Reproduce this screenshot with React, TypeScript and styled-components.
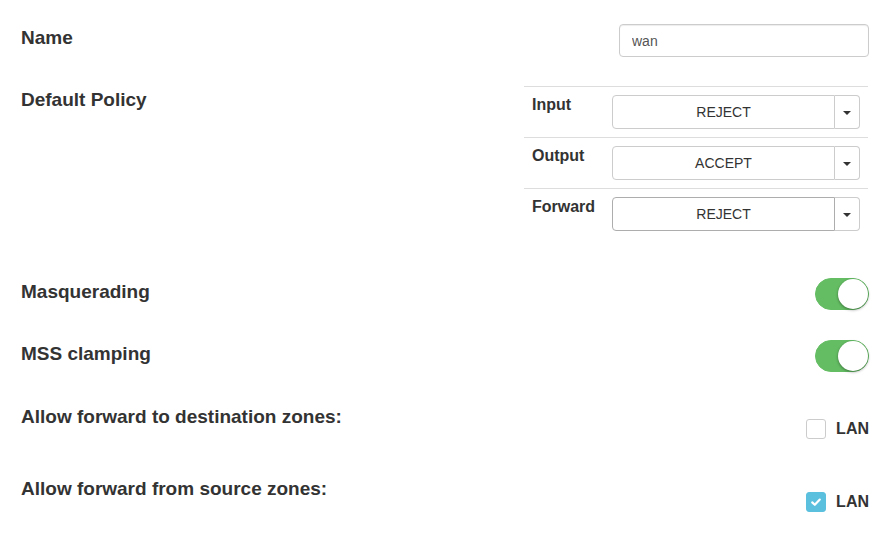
import React from 'react';
import styled, { createGlobalStyle } from 'styled-components';

const Global = createGlobalStyle`
  html, body { margin: 0; padding: 0; background: #fff; }
  body { font-family: "Liberation Sans", Arial, Helvetica, sans-serif; color: #333; }
  * { box-sizing: border-box; }
`;

const Page = styled.div`
  width: 890px;
  height: 545px;
  padding: 24px 21px 0 21px;
  overflow: hidden;
`;

const Row = styled.div<{ $top: number }>`
  display: flex;
  justify-content: space-between;
  align-items: flex-start;
  margin-top: ${(p) => p.$top}px;
`;

const Label = styled.div<{ $offset?: number }>`
  font-size: 19px;
  font-weight: 700;
  line-height: 20px;
  margin-top: ${(p) => p.$offset ?? 0}px;
`;

const TextInput = styled.input`
  width: 250px;
  height: 33px;
  border: 1px solid #ccc;
  border-radius: 4px;
  padding: 0 12px;
  font: 14px "Liberation Sans", Arial, sans-serif;
  color: #555;
  box-shadow: inset 0 1px 1px rgba(0, 0, 0, 0.075);
  outline: none;
`;

const PolicyTable = styled.div`
  width: 344px;
  margin-right: 1px;
  display: flex;
  flex-direction: column;
`;

const PolicyRow = styled.div`
  display: grid;
  grid-template-columns: 72px 248px;
  column-gap: 8px;
  padding: 8px;
  border-top: 1px solid #ddd;
`;

const PolicyLabel = styled.div`
  font-size: 16px;
  font-weight: 700;
  line-height: 20px;
`;

const SelectGroup = styled.div`
  display: flex;
  height: 34px;
`;

const SelectValue = styled.div<{ $active?: boolean }>`
  flex: 1;
  display: flex;
  align-items: center;
  justify-content: center;
  font-size: 14px;
  color: #333;
  border: 1px solid ${(p) => (p.$active ? '#adadad' : '#ccc')};
  border-radius: 4px 0 0 4px;
  background: #fff;
`;

const SelectCaret = styled.div`
  width: 25px;
  display: flex;
  align-items: center;
  justify-content: center;
  border: 1px solid #ccc;
  border-left: none;
  border-radius: 0 4px 4px 0;
  background: #fff;
  &::after {
    content: '';
    width: 0;
    height: 0;
    border-top: 4px solid #333;
    border-left: 4px solid transparent;
    border-right: 4px solid transparent;
    margin-top: 1px;
  }
`;

const Switch = styled.div<{ $on: boolean }>`
  position: relative;
  width: 54px;
  height: 32px;
  border-radius: 16px;
  border: 1px solid ${(p) => (p.$on ? '#64bd63' : '#dfdfdf')};
  background: ${(p) => (p.$on ? '#64bd63' : '#fff')};
`;

const Knob = styled.span<{ $on: boolean }>`
  position: absolute;
  top: 0;
  left: ${(p) => (p.$on ? '22px' : '0')};
  width: 30px;
  height: 30px;
  border-radius: 50%;
  background: #fff;
  box-shadow: 0 1px 3px rgba(0, 0, 0, 0.4);
`;

const CheckItem = styled.label`
  display: flex;
  align-items: center;
  gap: 10px;
  margin-top: 13px;
  font-size: 16px;
  font-weight: 700;
  line-height: 20px;
`;

const Box = styled.span<{ $checked: boolean }>`
  width: 20px;
  height: 20px;
  border-radius: 3px;
  border: 1px solid ${(p) => (p.$checked ? '#5bc0de' : '#ccc')};
  background: ${(p) => (p.$checked ? '#5bc0de' : '#fff')};
  display: flex;
  align-items: center;
  justify-content: center;
`;

const policies = [
  { name: 'Input', value: 'REJECT' },
  { name: 'Output', value: 'ACCEPT' },
  { name: 'Forward', value: 'REJECT', active: true },
];

const Toggle = ({ on }: { on: boolean }) => (
  <Switch $on={on}>
    <Knob $on={on} />
  </Switch>
);

const Check = ({ checked, text }: { checked: boolean; text: string }) => (
  <CheckItem>
    <Box $checked={checked}>
      {checked && (
        <svg width="12" height="12" viewBox="0 0 12 12">
          <polyline points="2.2,6.4 4.8,8.8 9.8,3.6" fill="none" stroke="#fff" strokeWidth="2.2" strokeLinecap="round" strokeLinejoin="round" />
        </svg>
      )}
    </Box>
    {text}
  </CheckItem>
);

export default function App() {
  return (
    <>
      <Global />
      <Page>
        <Row $top={0}>
          <Label $offset={4}>Name</Label>
          <TextInput defaultValue="wan" />
        </Row>
        <Row $top={29}>
          <Label $offset={4}>Default Policy</Label>
          <PolicyTable>
            {policies.map((p) => (
              <PolicyRow key={p.name}>
                <PolicyLabel>{p.name}</PolicyLabel>
                <SelectGroup>
                  <SelectValue $active={p.active}>{p.value}</SelectValue>
                  <SelectCaret />
                </SelectGroup>
              </PolicyRow>
            ))}
          </PolicyTable>
        </Row>
        <Row $top={39}>
          <Label $offset={4}>Masquerading</Label>
          <Toggle on />
        </Row>
        <Row $top={30}>
          <Label $offset={4}>MSS clamping</Label>
          <Toggle on />
        </Row>
        <Row $top={34}>
          <Label $offset={1}>Allow forward to destination zones:</Label>
          <Check checked={false} text="LAN" />
        </Row>
        <Row $top={40}>
          <Label>Allow forward from source zones:</Label>
          <Check checked text="LAN" />
        </Row>
      </Page>
    </>
  );
}
